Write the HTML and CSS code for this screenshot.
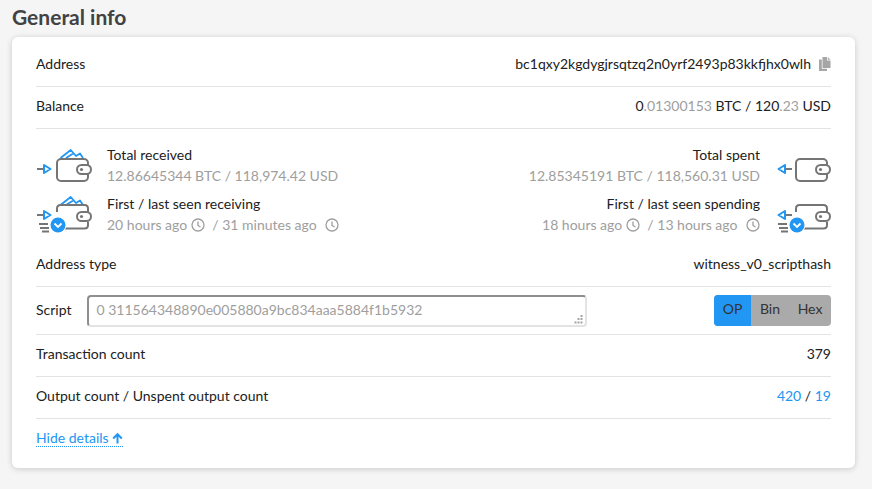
FILE: index.html
```
<!DOCTYPE html>
<html lang="en">
<head>
<meta charset="utf-8">
<title>General info</title>
<link rel="stylesheet" href="styles.css">
</head>
<body>
<h2 class="title">General info</h2>
<section class="card">
  <div class="row first">
    <span>Address</span>
    <span class="address">bc1qxy2kgdygjrsqtzq2n0yrf2493p83kkfjhx0wlh
      <svg class="copy" width="12" height="14" viewBox="0 0 12 14"><path d="M3.500 0H8v3.500h3.500V11h-8z" fill="#a6a6a6"/><path d="M8.800 0l2.700 2.800H8.800z" fill="#a6a6a6"/><path d="M0 2.500h2.800V11.700H8V14H0z" fill="#a6a6a6"/></svg>
    </span>
  </div>
  <div class="row">
    <span>Balance</span>
    <span>0<span class="dim">.01300153</span> BTC / 120<span class="dim">.23</span> USD</span>
  </div>
  <div class="stats">
    <div class="stat">
      <svg class="wallet" width="56" height="40" viewBox="0 0 56 40"><use href="#flap"/><use href="#w"/><use href="#in"/></svg>
      <div>
        <div>Total received</div>
        <div class="muted">12.86645344 BTC / 118,974.42 USD</div>
      </div>
    </div>
    <div class="stat end">
      <div>
        <div>Total spent</div>
        <div class="muted">12.85345191 BTC / 118,560.31 USD</div>
      </div>
      <svg class="wallet" width="56" height="40" viewBox="0 0 56 40"><use href="#w"/><use href="#out"/></svg>
    </div>
    <div class="stat">
      <svg class="wallet" width="56" height="40" viewBox="0 0 56 40"><use href="#flap2"/><use href="#w2"/><use href="#in2"/><use href="#badge"/></svg>
      <div>
        <div>First / last seen receiving</div>
        <div class="muted">20 hours ago <svg class="clock" width="14" height="14" viewBox="0 0 14 14"><use href="#clock"/></svg> <span class="sep">/ 31 minutes ago</span> <svg class="clock far" width="14" height="14" viewBox="0 0 14 14"><use href="#clock"/></svg></div>
      </div>
    </div>
    <div class="stat end">
      <div>
        <div>First / last seen spending</div>
        <div class="muted">18 hours ago <svg class="clock" width="14" height="14" viewBox="0 0 14 14"><use href="#clock"/></svg> <span class="sep">/ 13 hours ago</span> <svg class="clock far" width="14" height="14" viewBox="0 0 14 14"><use href="#clock"/></svg></div>
      </div>
      <svg class="wallet" width="56" height="40" viewBox="0 0 56 40"><use href="#w2"/><use href="#out2"/><use href="#badge"/></svg>
    </div>
  </div>
  <div class="row type-row">
    <span>Address type</span>
    <span>witness_v0_scripthash</span>
  </div>
  <div class="row script-row">
    <span class="script-label">Script</span>
    <div class="script-box">
      <textarea class="script" readonly>0 311564348890e005880a9bc834aaa5884f1b5932</textarea>
      <svg class="grip" width="9" height="9" viewBox="0 0 9 9"><path d="M6.500 0h2v2h-2zM3.500 3h2v2h-2zM6.500 3h2v2h-2zM0.500 6.500h2v2h-2zM3.500 6.500h2v2h-2zM6.500 6.500h2v2h-2z" fill="#a3a3a3"/></svg>
    </div>
    <div class="tabs">
      <span class="tab tab-op">OP</span><span class="tab tab-bin">Bin</span><span class="tab tab-hex">Hex</span>
    </div>
  </div>
  <div class="row">
    <span>Transaction count</span>
    <span>379</span>
  </div>
  <div class="row">
    <span>Output count / Unspent output count</span>
    <span><a class="link">420</a> / <a class="link">19</a></span>
  </div>
  <div class="foot">
    <a class="toggle">Hide details <svg class="up" width="11" height="12" viewBox="0 0 11 12"><path d="M5.500 11.500V2.500M1.200 6.500l4.300-4.300 4.300 4.300" fill="none" stroke="#2196f3" stroke-width="2"/></svg></a>
  </div>
</section>
<svg class="defs" width="0" height="0">
  <defs>
    <g id="flap"><path d="M24.500 13L34.700 5 40 11 44 8.500 47 13M30 13l8-5" fill="none" stroke="#2196f3" stroke-width="1.800" stroke-linejoin="round"/></g>
    <g id="flap2"><path d="M24.500 11L34.700 3 40 9 44 6.500 47 11M30 11l8-5" fill="none" stroke="#2196f3" stroke-width="1.800" stroke-linejoin="round"/></g>
    <g id="w"><rect x="21" y="14" width="31" height="22" rx="4" fill="#fff" stroke="#757575" stroke-width="2"/><rect x="41" y="20" width="14" height="9" rx="4.500" fill="#fff" stroke="#757575" stroke-width="2"/><circle cx="45.500" cy="24.500" r="1.600" fill="#757575"/></g>
    <g id="w2"><path d="M21 18v-3.500c0-2 1.500-3.500 3.500-3.500h24c2 0 3.500 1.500 3.500 3.500V18M52 28v3c0 2-1.500 3.500-3.500 3.500H29" fill="none" stroke="#757575" stroke-width="2"/><rect x="41" y="18" width="14" height="9" rx="4.500" fill="#fff" stroke="#757575" stroke-width="2"/><circle cx="45.500" cy="22.500" r="1.600" fill="#757575"/></g>
    <g id="in"><path d="M1 24h6" stroke="#757575" stroke-width="2"/><path d="M8 20l6.500 4L8 28z" fill="#fff" stroke="#2196f3" stroke-width="2" stroke-linejoin="round"/></g>
    <g id="out"><path d="M11 24h6" stroke="#757575" stroke-width="2"/><path d="M10 20L3.500 24l6.500 4z" fill="#fff" stroke="#2196f3" stroke-width="2" stroke-linejoin="round"/></g>
    <g id="in2"><path d="M1 21h6M3 30h9M4 34h9M6 37.500h7" stroke="#757575" stroke-width="1.800"/><path d="M8 17l6.500 4L8 25z" fill="#fff" stroke="#2196f3" stroke-width="2" stroke-linejoin="round"/></g>
    <g id="out2"><path d="M11 21h6M3 30h9M4 34h9M6 37.500h7" stroke="#757575" stroke-width="1.800"/><path d="M10 17l-6.500 4 6.500 4z" fill="#fff" stroke="#2196f3" stroke-width="2" stroke-linejoin="round"/></g>
    <g id="badge"><circle cx="22" cy="31" r="8.500" fill="#fff"/><circle cx="22" cy="31" r="7.500" fill="#2196f3"/><path d="M18.500 29.500l3.500 3.500 3.500-3.500" fill="none" stroke="#fff" stroke-width="1.800"/></g>
    <g id="clock"><circle cx="7" cy="7" r="6" fill="none" stroke="#9e9e9e" stroke-width="1.300"/><path d="M7 3.500V7.500l2.500 1.500" fill="none" stroke="#9e9e9e" stroke-width="1.300"/></g>
  </defs>
</svg>
</body>
</html>
```
FILE: styles.css
```
* {
  box-sizing: border-box;
}

html,
body {
  height: 100%;
}

body {
  margin: 0;
  padding: 5px 17px 0 12px;
  background: #f5f5f5;
  color: #212121;
  font-family: Lato, "Liberation Sans", sans-serif;
  font-size: 14px;
  line-height: 21px;
  overflow: hidden;
}

.title {
  margin: 0 0 8px;
  font-size: 21px;
  line-height: 24px;
  font-weight: 700;
  color: #424242;
}

.card {
  padding: 6px 24px 0;
  height: 431px;
  background: #fff;
  border-radius: 6px;
  box-shadow: 0 1px 6px rgba(0, 0, 0, 0.18);
}

.row {
  display: flex;
  justify-content: space-between;
  align-items: center;
  height: 42px;
  padding-bottom: 4px;
  border-bottom: 1px solid #e3e3e3;
}

.row.first {
  height: 44px;
  padding-bottom: 2px;
}

.address {
  display: flex;
  align-items: center;
  gap: 8px;
}

.copy {
  flex: none;
}

.dim {
  color: #9e9e9e;
}

.stats {
  display: grid;
  grid-template-columns: 1fr 1fr;
  row-gap: 7px;
  padding: 15px 0 7px;
}

.stat {
  display: flex;
  align-items: center;
  gap: 15px;
}

.stat.end {
  justify-content: flex-end;
  text-align: right;
}

.muted {
  color: #9e9e9e;
}

.clock {
  vertical-align: -2px;
}

.sep {
  margin-left: 4px;
}

.far {
  margin-left: 5px;
}

.row.type-row {
  height: 45px;
  padding-bottom: 1px;
}

.row.script-row {
  height: 48px;
  gap: 16px;
  padding-bottom: 0;
}

.script-label {
  margin-bottom: 2px;
}

.script-box {
  position: relative;
  flex: none;
  height: 32px;
  margin-right: auto;
}

.script {
  display: block;
  width: 500px;
  height: 32px;
  padding: 2px 7px;
  border: 2px solid;
  border-color: #8f8f8f #e3e3e3 #e3e3e3 #8f8f8f;
  border-radius: 4px;
  outline: none;
  resize: none;
  color: #9e9e9e;
  font: 14px/21px Lato, "Liberation Sans", sans-serif;
  overflow: hidden;
}

.grip {
  position: absolute;
  right: 4px;
  bottom: 3px;
}

.tabs {
  display: flex;
  height: 31px;
  border-radius: 4px;
  overflow: hidden;
  background: #aaa;
  color: #333;
}

.tab {
  line-height: 27px;
  text-align: center;
}

.tab-op {
  width: 37px;
  background: #2196f3;
}

.tab-bin {
  width: 38px;
}

.tab-hex {
  width: 42px;
}

.foot {
  display: flex;
  padding-top: 10px;
}

.link {
  color: #2196f3;
}

.toggle {
  display: flex;
  align-items: center;
  gap: 3px;
  height: 18px;
  color: #2196f3;
  line-height: 18px;
  border-bottom: 1px dotted #2196f3;
}

.defs {
  position: absolute;
}
```
